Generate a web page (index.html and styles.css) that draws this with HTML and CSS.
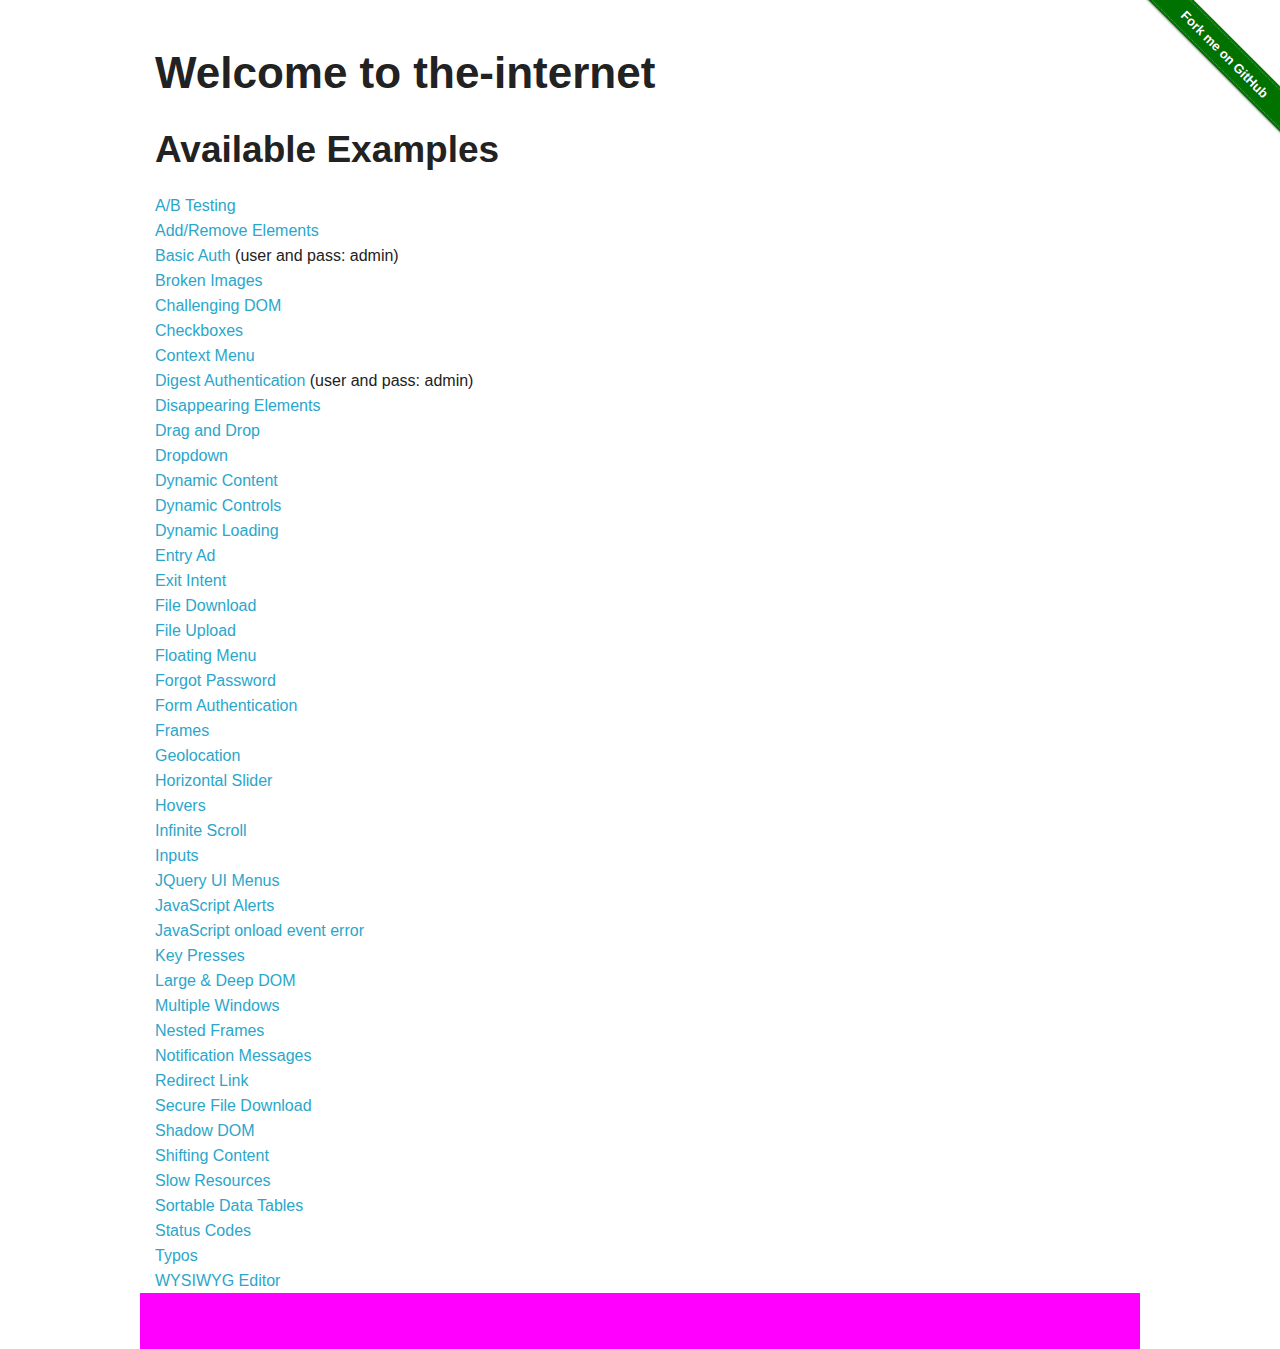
FILE: index.html
```html
<!DOCTYPE html>
<html lang="en">
<head>
<meta charset="utf-8">
<title>The Internet</title>
<link rel="stylesheet" href="styles.css">
</head>
<body>
<a class="ribbon" href="#"><span class="ribbon-band"><span class="ribbon-text">Fork me on GitHub</span></span></a>
<div class="row">
  <div class="content">
    <h1 class="heading">Welcome to the-internet</h1>
    <h2 class="subheading">Available Examples</h2>
    <ul class="examples">
      <li><a href="#">A/B Testing</a></li>
      <li><a href="#">Add/Remove Elements</a></li>
      <li><a href="#">Basic Auth</a> (user and pass: admin)</li>
      <li><a href="#">Broken Images</a></li>
      <li><a href="#">Challenging DOM</a></li>
      <li><a href="#">Checkboxes</a></li>
      <li><a href="#">Context Menu</a></li>
      <li><a href="#">Digest Authentication</a> (user and pass: admin)</li>
      <li><a href="#">Disappearing Elements</a></li>
      <li><a href="#">Drag and Drop</a></li>
      <li><a href="#">Dropdown</a></li>
      <li><a href="#">Dynamic Content</a></li>
      <li><a href="#">Dynamic Controls</a></li>
      <li><a href="#">Dynamic Loading</a></li>
      <li><a href="#">Entry Ad</a></li>
      <li><a href="#">Exit Intent</a></li>
      <li><a href="#">File Download</a></li>
      <li><a href="#">File Upload</a></li>
      <li><a href="#">Floating Menu</a></li>
      <li><a href="#">Forgot Password</a></li>
      <li><a href="#">Form Authentication</a></li>
      <li><a href="#">Frames</a></li>
      <li><a href="#">Geolocation</a></li>
      <li><a href="#">Horizontal Slider</a></li>
      <li><a href="#">Hovers</a></li>
      <li><a href="#">Infinite Scroll</a></li>
      <li><a href="#">Inputs</a></li>
      <li><a href="#">JQuery UI Menus</a></li>
      <li><a href="#">JavaScript Alerts</a></li>
      <li><a href="#">JavaScript onload event error</a></li>
      <li><a href="#">Key Presses</a></li>
      <li><a href="#">Large &amp; Deep DOM</a></li>
      <li><a href="#">Multiple Windows</a></li>
      <li><a href="#">Nested Frames</a></li>
      <li><a href="#">Notification Messages</a></li>
      <li><a href="#">Redirect Link</a></li>
      <li><a href="#">Secure File Download</a></li>
      <li><a href="#">Shadow DOM</a></li>
      <li><a href="#">Shifting Content</a></li>
      <li><a href="#">Slow Resources</a></li>
      <li><a href="#">Sortable Data Tables</a></li>
      <li><a href="#">Status Codes</a></li>
      <li><a href="#">Typos</a></li>
      <li><a href="#">WYSIWYG Editor</a></li>
    </ul>
  </div>
  <div class="footer"></div>
</div>
</body>
</html>
```
FILE: styles.css
```css
html, body {
  margin: 0;
  padding: 0;
  background: #fff;
}
body {
  font-family: "Liberation Sans", Arial, Helvetica, sans-serif;
  color: #222222;
  font-size: 16px;
}
.row {
  max-width: 1000px;
  margin: 0 auto;
}
.content {
  padding: 45px 15px 0;
}
.heading {
  font-size: 44px;
  line-height: 55px;
  font-weight: bold;
  margin: 0;
  color: #222222;
}
.subheading {
  font-size: 37px;
  line-height: 46px;
  font-weight: bold;
  margin: 27px 0 0;
  color: #222222;
}
.examples {
  list-style: none;
  margin: 20px 0 0;
  padding: 0;
  line-height: 25px;
}
.examples a {
  color: #2ba6cb;
  text-decoration: none;
}
.footer {
  height: 56px;
  background: #ff00ff;
}
.ribbon {
  position: absolute;
  top: 0;
  right: 0;
  width: 149px;
  height: 149px;
  overflow: hidden;
  text-decoration: none;
}
.ribbon-band {
  position: absolute;
  left: -10px;
  top: 38px;
  width: 208px;
  height: 32px;
  background: #007200;
  transform: rotate(45deg);
  display: flex;
  align-items: center;
  justify-content: center;
  box-shadow: 0 1px 2px rgba(0, 0, 0, 0.35);
}
.ribbon-band::before,
.ribbon-band::after {
  content: "";
  position: absolute;
  left: 0;
  right: 0;
  height: 0;
  border-top: 1px dotted rgba(255, 255, 255, 0.3);
}
.ribbon-band::before {
  top: 2px;
}
.ribbon-band::after {
  bottom: 2px;
}
.ribbon-text {
  color: #fff;
  font-family: "Liberation Sans", Arial, sans-serif;
  font-weight: bold;
  font-size: 13px;
  white-space: nowrap;
  text-shadow: 0 0 1px rgba(0, 0, 0, 0.4);
}
```
